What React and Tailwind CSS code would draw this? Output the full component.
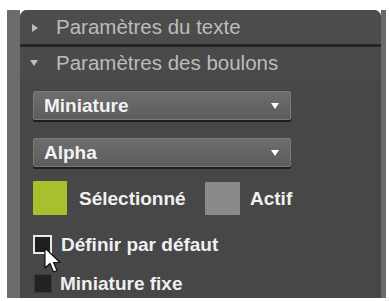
export default function App() {
  const font = { fontFamily: '"Liberation Sans", Arial, sans-serif' };

  return (
    <div className="w-[389px] h-[301px] bg-white pt-[10px] pl-[7px] pr-[3px] pb-[3px]" style={font}>
      <div className="flex h-full">
        <div className="w-[13px] bg-[#6c6c6c]" />
        <div className="relative flex-1 flex flex-col bg-[#474747] rounded-t-[7px] overflow-hidden">
          {/* section headers */}
          <div className="h-[34px] flex items-center bg-[#4c4c4c] pt-[1px]">
            <span className="ml-[12px] w-0 h-0 border-y-[4px] border-y-transparent border-l-[6px] border-l-[#bdbdbd]" />
            <span className="ml-[18px] text-[20.5px] leading-none text-[#bcbcbc]">Paramètres du texte</span>
          </div>
          <div className="h-[3px] bg-[#262626]" />
          <div className="h-[32px] flex items-center bg-[#4a4a4a]">
            <span className="ml-[10px] w-0 h-0 border-x-[4px] border-x-transparent border-t-[6px] border-t-[#bdbdbd]" />
            <span className="ml-[18px] text-[20.5px] leading-none text-[#bcbcbc]">Paramètres des boulons</span>
          </div>

          <div className="flex flex-col pl-[13px]">
            {['Miniature', 'Alpha'].map((label, i) => (
              <div
                key={label}
                className={`${i === 0 ? 'mt-[12px]' : 'mt-[18px]'} w-[258px] h-[29px] flex items-center justify-between pl-[10px] pr-[11px] rounded-[2px] bg-gradient-to-b from-[#6e6e6e] to-[#5c5c5c] border border-[#7a7a7a] shadow-[0_2px_0_#1e1e1e]`}
              >
                <span className="text-[19px] font-bold leading-none text-[#f2f2f2]">{label}</span>
                <span className="w-0 h-0 border-x-[4px] border-x-transparent border-t-[6px] border-t-white" />
              </div>
            ))}

            <div className="mt-[14px] flex items-center h-[34px]">
              <div className="w-[172px] flex items-center">
                <div className="w-[34px] h-[34px] bg-[#a6c02e] rounded-[1px]" />
                <span className="ml-[12px] text-[19px] font-bold leading-none text-[#f0f0f0]">Sélectionné</span>
              </div>
              <div className="w-[35px] h-[33px] bg-[#8a8a8a] rounded-[1px]" />
              <span className="ml-[10px] text-[19px] font-bold leading-none text-[#f0f0f0]">Actif</span>
            </div>

            <div className="mt-[20px] flex items-center h-[19px]">
              <div className="w-[19px] h-[19px] bg-[#1f1f1f] border-2 border-[#e8e8e8]" />
              <span className="ml-[9px] text-[19px] font-bold leading-none text-[#f0f0f0]">Définir par défaut</span>
            </div>

            <div className="mt-[20px] flex items-center h-[19px] pl-[1px]">
              <div className="w-[18px] h-[19px] bg-[#222222] border border-[#3a3a3a]" />
              <span className="ml-[8px] text-[19px] font-bold leading-none text-[#f0f0f0]">Miniature fixe</span>
            </div>
          </div>

          {/* mouse pointer */}
          <svg className="absolute left-[24px] top-[237px]" width="20" height="28" viewBox="0 0 20 28">
            <path d="M1 1 L1 21 L6 16.5 L9.5 25 L13 23.5 L9.5 15.5 L16 15.5 Z" fill="#ffffff" stroke="#111111" strokeWidth="1.2" strokeLinejoin="round" />
          </svg>
        </div>
        <div className="w-[5px] bg-[#6a6a6a]" />
      </div>
    </div>
  );
}
